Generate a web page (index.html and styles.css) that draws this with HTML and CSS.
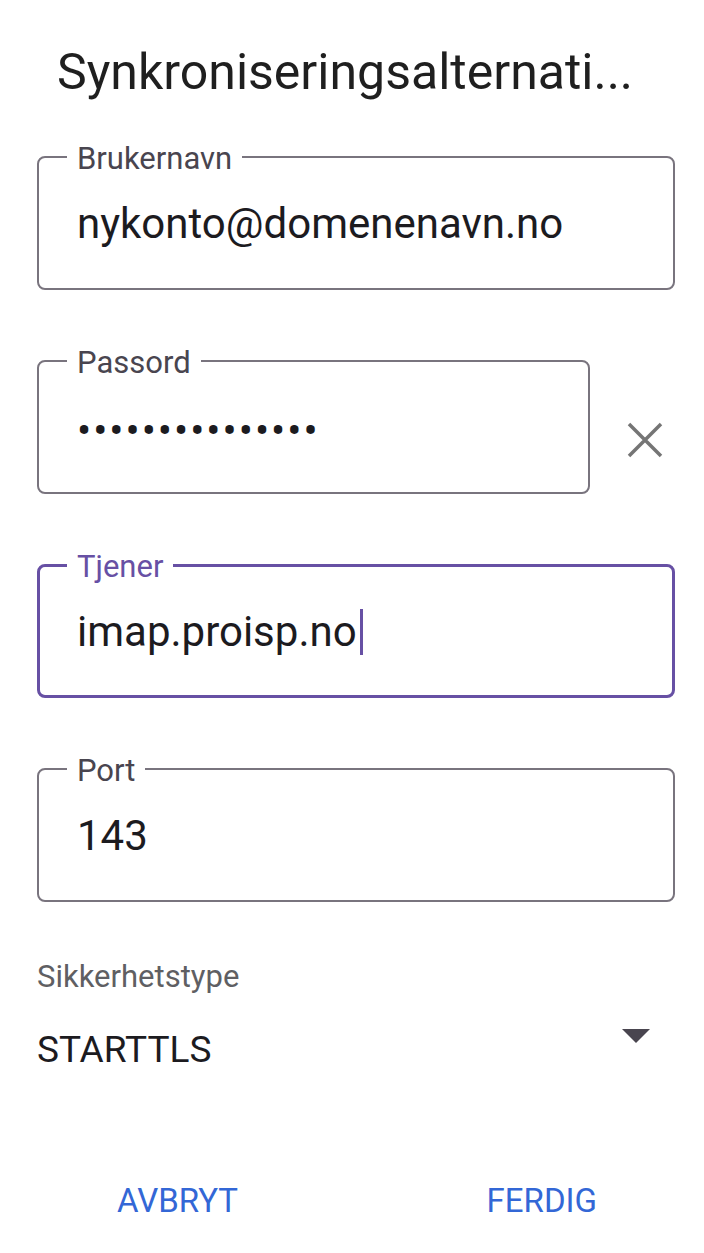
FILE: index.html
```html
<!DOCTYPE html>
<html lang="nb">
<head>
    <meta charset="UTF-8">
    <meta name="viewport" content="width=device-width, initial-scale=1.0">
    <title>Synkroniseringsalternativer</title>
    <link rel="stylesheet" href="styles.css">
</head>
<body>

<div class="dialog">
    <h1 class="title">Synkroniseringsalternati...</h1>

    <!-- account fields -->
    <div class="field">
        <span class="field-label">Brukernavn</span>
        <span class="field-value">nykonto@domenenavn.no</span>
    </div>

    <div class="field-row">
        <div class="field field-short">
            <span class="field-label">Passord</span>
            <span class="field-value dots">•••••••••••••••</span>
        </div>
        <button class="clear-btn" aria-label="Fjern">
            <svg width="36" height="36" viewBox="0 0 36 36">
                <path d="M2 2 L34 34 M34 2 L2 34" stroke="#757575" stroke-width="3.5" fill="none"/>
            </svg>
        </button>
    </div>

    <div class="field field-active">
        <span class="field-label">Tjener</span>
        <span class="field-value">imap.proisp.no<span class="cursor"></span></span>
    </div>

    <div class="field">
        <span class="field-label">Port</span>
        <span class="field-value">143</span>
    </div>

    <!-- security type -->
    <div class="select-label">Sikkerhetstype</div>
    <div class="select">
        <span class="select-value">STARTTLS</span>
        <svg class="select-arrow" width="28" height="14" viewBox="0 0 28 14">
            <path d="M0 0 H28 L14 14 Z" fill="#49454f"/>
        </svg>
    </div>

    <div class="actions">
        <button class="text-btn">AVBRYT</button>
        <button class="text-btn">FERDIG</button>
    </div>
</div>

</body>
</html>
```

FILE: styles.css
```css
body {
    margin: 0;
    font-family: Roboto, "Noto Sans", sans-serif;
    color: #1c1b1f;
    background: #fff;
}
.dialog {
    padding: 0 29px 0 37px;
}
.title {
    margin: 42px 0 0 20px;
    font-size: 50px;
    font-weight: 400;
    line-height: 60px;
    color: #1f1f1f;
    white-space: nowrap;
}
.field {
    position: relative;
    box-sizing: border-box;
    height: 134px;
    margin-top: 54px;
    padding-left: 38px;
    border: 2px solid #79747e;
    border-radius: 8px;
    display: flex;
    align-items: center;
}
.field-label {
    position: absolute;
    top: -15px;
    left: 28px;
    padding: 0 10px;
    background: #fff;
    font-size: 31px;
    line-height: 32px;
    color: #49454f;
}
.field-value {
    font-size: 42px;
    line-height: 48px;
    color: #1c1b1f;
    display: flex;
    align-items: center;
    margin-top: 2px;
}
.dots {
    font-size: 42px;
    letter-spacing: 2px;
    margin-top: 8px;
}
.field-row {
    display: flex;
    margin-top: 70px;
}
.field-row .field {
    margin-top: 0;
}
.field-short {
    width: 553px;
    flex: none;
}
.clear-btn {
    border: none;
    background: none;
    padding: 0;
    margin: 62px 0 0 37px;
    width: 36px;
    height: 36px;
    cursor: pointer;
}
.field + .field, .field-row + .field {
    margin-top: 70px;
}
.field-active {
    border: 3px solid #6750a4;
    padding-left: 37px;
}
.field-active .field-label {
    color: #6750a4;
    top: -16px;
    left: 27px;
}
.cursor {
    display: inline-block;
    width: 3px;
    height: 46px;
    margin-left: 3px;
    background: #6750a4;
}
.select-label {
    margin-top: 57px;
    font-size: 31px;
    line-height: 36px;
    color: #5f5f63;
}
.select {
    display: flex;
    justify-content: space-between;
    align-items: flex-start;
    margin-top: 31px;
    padding-right: 25px;
}
.select-value {
    font-size: 37px;
    line-height: 48px;
    color: #1c1b1f;
}
.select-arrow {
    margin-top: 3px;
}
.actions {
    display: flex;
    justify-content: space-between;
    margin-top: 107px;
    padding: 0 78px 0 80px;
}
.text-btn {
    border: none;
    background: none;
    padding: 0;
    font-family: Roboto, "Noto Sans", sans-serif;
    font-size: 33px;
    line-height: 40px;
    color: #3367d6;
    cursor: pointer;
}
```
